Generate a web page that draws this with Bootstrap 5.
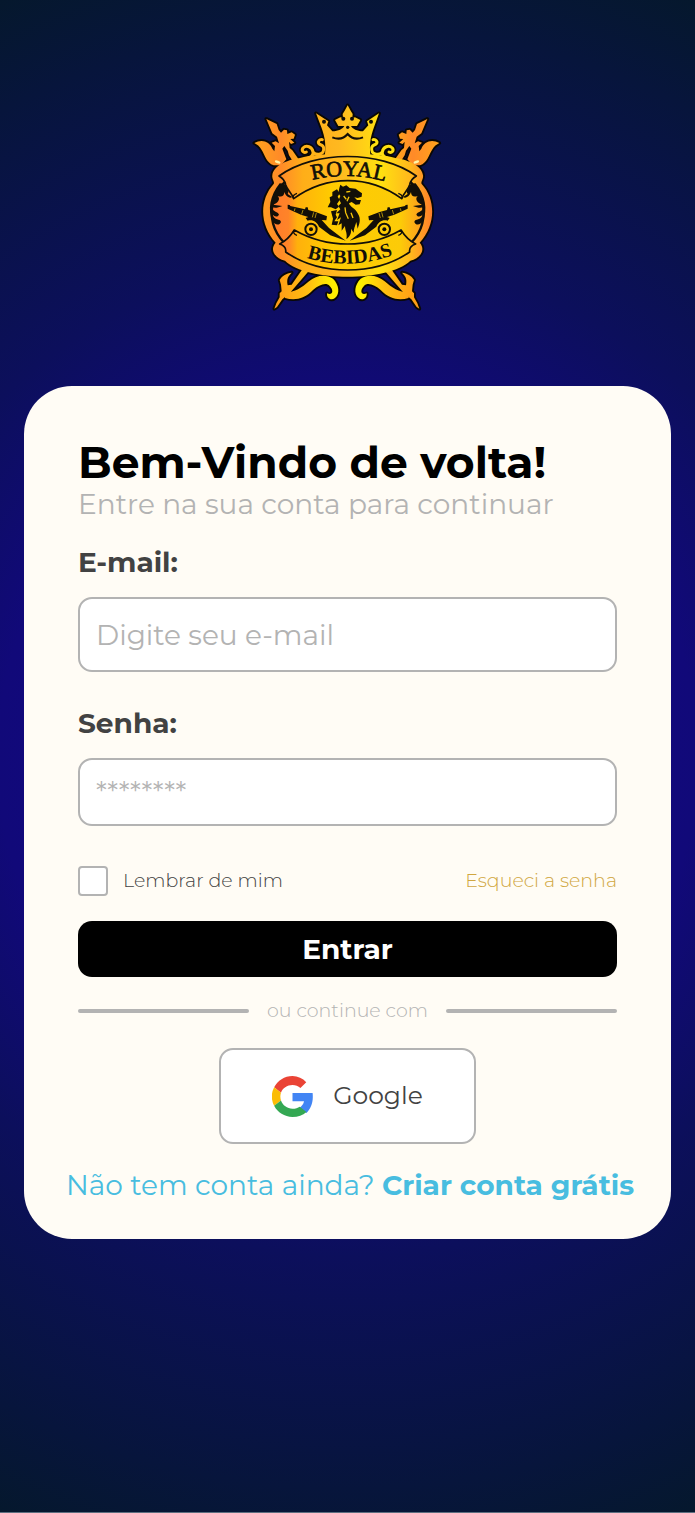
<!DOCTYPE html>
<html lang="pt-BR">
<head>
<meta charset="utf-8">
<meta name="viewport" content="width=device-width, initial-scale=1">
<title>Royal Bebidas - Entrar</title>
<link href="https://cdn.jsdelivr.net/npm/bootstrap@5.3.0/dist/css/bootstrap.min.css" rel="stylesheet">
<style>
  body {
    font-family: Montserrat, "Open Sans", sans-serif;
    font-size: 28px;
    line-height: 36px;
    color: #424242;
    background: #05182d radial-gradient(circle farthest-corner at 50% 50%, #14068c 0%, #110979 42%, #0c0f5c 60%, #07153c 88%, #05182d 100%);
    border-bottom: 1px solid #5d6f80;
  }
  .page-shell { padding: 96px 24px 0; }
  .brand-logo { height: 220px; }
  .login-card {
    margin-top: 70px;
    padding: 54px 54px 36px;
    border-radius: 48px;
    background: #fffcf5;
  }
  .login-title { font-size: 44px; line-height: 44px; font-weight: 700; color: #000; }
  .login-subtitle { line-height: 40px; margin-bottom: 20px; }
  .soft { color: #b3b3b3; }
  .field-label { font-weight: 700; margin-bottom: 17px; }
  .field-box {
    height: 75px;
    padding: 0 16px;
    border: 2px solid #b3b3b3;
    border-radius: 14px;
    font-size: 28px;
    background: #fff;
  }
  .field-box::placeholder { color: #b3b3b3; }
  .field-short { height: 68px; }
  .mb-field { margin-bottom: 33px; }
  .options-row { margin: 40px 0 25px; font-size: 19px; line-height: 30px; font-weight: 300; }
  .remember-box { width: 30px; height: 30px; border: 2px solid #b3b3b3; border-radius: 4px !important; }
  .remember { gap: 15px; }
  .forgot { color: #d0a640; }
  .btn-enter {
    height: 56px;
    padding: 0;
    border: 0;
    border-radius: 14px;
    background: #000;
    color: #fff;
    font-size: 28px;
    font-weight: 700;
  }
  .divider { gap: 18px; margin: 20px 0 23px; font-size: 19px; line-height: 28px; font-weight: 300; }
  .divider-line { height: 4px; border-radius: 2px; background: #b3b3b3; }
  .btn-google {
    width: 257px;
    height: 96px;
    gap: 20px;
    border: 2px solid #b3b3b3;
    border-radius: 14px;
    background: #fff;
    color: #424242;
    font-size: 25px;
  }
  .signup { margin: 23px -30px 0 -12px; color: #48bde0; }
  .signup a { color: inherit; font-weight: 700; }
</style>
</head>
<body class="min-vh-100">
<main class="page-shell">
  <header class="text-center">
    <svg class="brand-logo d-block mx-auto" viewBox="0 0 615 660" role="img" aria-label="Royal Bebidas">
      <defs>
        <linearGradient id="gold" gradientUnits="userSpaceOnUse" x1="30" y1="0" x2="585" y2="0">
          <stop offset="0" stop-color="#ffa31c"/><stop offset=".14" stop-color="#ff8a28"/><stop offset=".26" stop-color="#ffae18"/>
          <stop offset=".45" stop-color="#ffb820"/><stop offset=".68" stop-color="#ffe010"/><stop offset=".84" stop-color="#ffb81c"/><stop offset="1" stop-color="#ff6a30"/>
        </linearGradient>
        <linearGradient id="goldLow" gradientUnits="userSpaceOnUse" x1="80" y1="0" x2="535" y2="0">
          <stop offset="0" stop-color="#ff9618"/><stop offset=".25" stop-color="#ffc010"/><stop offset=".4" stop-color="#fff000"/>
          <stop offset=".6" stop-color="#ffe800"/><stop offset="1" stop-color="#ff9c18"/>
        </linearGradient>
        <linearGradient id="goldIn" gradientUnits="userSpaceOnUse" x1="80" y1="0" x2="535" y2="0">
          <stop offset="0" stop-color="#ff7a2c"/><stop offset=".11" stop-color="#ff8428"/><stop offset=".17" stop-color="#ffb00c"/>
          <stop offset=".4" stop-color="#ffcc00"/><stop offset=".85" stop-color="#fccb08"/><stop offset="1" stop-color="#ff9a20"/>
        </linearGradient>
        <g id="spear">
          <path d="M64 69L95 84L101 102L108 110L117 101L126 103L127 114L140 109L150 116L146 128L136 129L148 140L138 144L132 137L134 156L142 163L165 196L150 206L132 178L128 164L118 150L112 158L124 190L108 208L86 208C64 200 60 178 50 162C44 150 36 146 28 141C50 128 74 136 82 158L88 166L90 150L80 140L92 136L102 142L96 122L82 112Z"/>
        </g>
        <path id="scroll" d="M184 168C176 172 168 164 174 156C184 146 202 152 204 168C206 178 196 186 184 188M204 168C216 180 238 176 236 156C234 142 220 150 220 138C222 132 228 130 232 131" fill="none"/>
        <g id="saber">
          <path d="M172 520L192 524L134 592L112 610L96 633L88 638L94 622L104 604L104 592L110 586L108 566L104 552C112 538 124 532 140 530C130 540 124 548 128 568L140 566Z"/>
          <path d="M120 590C150 588 170 576 192 556C214 536 244 534 264 548C282 566 286 592 270 606C258 616 244 606 246 592C262 600 268 584 254 570C244 558 222 566 204 582C178 610 148 614 120 606Z"/>
        </g>
        <path id="crown" d="M236 200C246 152 240 124 229 94L213 52L250 76L246 88L262 106C280 106 294 98 298 90L280 90L270 72L286 64L294 66L293 54L299 44L308 28L317 44L323 54L322 66L330 64L346 72L336 90L318 90C322 98 336 106 354 106L370 88L366 76L402 52L387 94C376 124 370 152 380 200Z"/>
        <path id="shield" d="M82 238C84 212 122 192 165 186C220 168 396 168 451 186C494 192 532 212 534 238C536 250 526 256 530 264C574 312 572 388 524 440C544 462 524 488 496 494C430 558 186 558 120 494C92 488 72 462 92 440C44 388 42 312 86 264C90 256 80 250 82 238Z"/>
        <path id="royalArc" d="M190 255Q308 222 432 260"/>
        <path id="bebidasArc" d="M180 484Q308 526 450 475"/>
        <g id="cannon">
          <path d="M128 326L134 327L136 330L180 340L182 334L188 334L190 342L212 348L234 356L246 361L244 373L228 372L206 366L192 364L168 356L138 343L128 338Z"/>
          <path d="M182 366L198 360L228 370L252 396L302 434L256 418L222 392C216 378 204 370 188 374Z"/>
          <circle cx="198" cy="400" r="17" fill="none" stroke="#120f08" stroke-width="6"/>
          <circle cx="198" cy="400" r="6"/>
          <path d="M174 342L170 355M206 349L202 364M214 351L210 366M150 337L148 345" stroke="#f6c50a" stroke-width="2"/>
        </g>
        <path id="leaf" d="M104 262C132 262 134 286 128 294L142 303C132 310 120 296 118 288C118 302 108 304 98 300C108 310 98 322 84 326L112 330C98 336 90 336 80 334C86 350 98 346 102 356C96 366 86 360 82 354C88 376 106 366 108 378C102 392 88 384 82 376C68 340 74 300 104 262Z"/>
      </defs>
      <g fill="#0a0804" stroke="#0a0804" stroke-width="11" stroke-linejoin="round" stroke-linecap="round">
        <use href="#spear"/><use href="#spear" transform="translate(611 0) scale(-1 1)"/>
        <g stroke-width="19"><use href="#scroll"/><use href="#scroll" transform="translate(616 0) scale(-1 1)"/></g>
        <use href="#saber"/><use href="#saber" transform="translate(611 0) scale(-1 1)"/>
        <use href="#crown"/><use href="#shield"/>
      </g>
      <g fill="url(#gold)">
        <use href="#spear"/>
        <g transform="translate(611 0) scale(-1 1)"><use href="#spear"/></g>
        <use href="#crown"/>
      </g>
      <g stroke-width="9" stroke-linecap="round">
        <use href="#scroll" stroke="#ffb418"/>
        <use href="#scroll" stroke="#ffe010" transform="translate(616 0) scale(-1 1)"/>
      </g>
      <g fill="url(#goldLow)">
        <use href="#saber"/>
        <g transform="translate(611 0) scale(-1 1)"><use href="#saber"/></g>
      </g>
      <use href="#shield" fill="url(#gold)"/>
      <ellipse cx="308" cy="350" rx="228" ry="163" fill="url(#goldIn)" stroke="#120f08" stroke-width="7"/>
      <g fill="#120f08">
        <use href="#leaf"/><use href="#leaf" transform="translate(616 0) scale(-1 1)"/>
        <use href="#cannon"/><use href="#cannon" transform="translate(616 0) scale(-1 1)"/>
        <path d="M283 276L286 266L294 272L304 268L314 276L332 278L342 286L351 292L350 302L338 306L328 304L336 312L348 312L344 325L332 326L320 318L312 322C316 334 332 338 338 352C350 370 342 386 338 398L334 378C330 392 326 398 326 410L318 398C320 414 312 424 304 429C308 412 300 404 300 390L290 404L290 382L280 388L288 364L276 372L284 352L274 352L286 340L280 330L288 322L282 310L286 300L280 292Z"/>
        <path d="M276 280L284 292L278 302L284 312L276 324L282 332L272 340L258 334L248 334L256 318L254 304L262 300L262 288Z"/>
        <path d="M258 346L276 342L272 356L276 364L268 376L280 376L276 388L260 386L264 368Z"/>
        <path d="M304 288L316 286M296 300L304 310M312 302L306 316M300 334L302 350L310 368M318 350L324 366" fill="none" stroke="#f6c50a" stroke-width="4"/>
        <path d="M262 124C282 132 298 126 308 114C318 126 334 132 354 124" fill="none" stroke="#120f08" stroke-width="6"/>
        <circle cx="295" cy="68" r="6"/><circle cx="321" cy="68" r="6"/><circle cx="308" cy="94" r="5"/>
        <circle cx="237" cy="77" r="6"/><circle cx="378" cy="77" r="6"/>
      </g>
      <g fill="url(#gold)" stroke="#120f08" stroke-width="5" stroke-linejoin="round">
        <path d="M102 240C210 162 406 162 514 240C500 248 496 256 494 266C490 282 476 290 470 308C370 236 246 236 146 308C140 290 126 282 122 266C120 256 116 248 102 240Z"/>
        <path fill="url(#goldIn)" d="M104 444C120 436 138 418 148 402C246 458 370 458 468 402C478 418 496 436 512 444C500 448 492 456 494 468C390 540 226 540 122 468C124 456 116 448 104 444Z"/>
      </g>
      <g fill="none" stroke="#120f08" stroke-width="4">
        <path d="M148 402C142 408 148 416 156 418M468 402C474 408 468 416 460 418M146 308C140 300 150 294 156 292M470 308C476 300 466 294 460 292"/>
      </g>
      <g fill="#120f08" font-family="'Liberation Serif', serif">
        <text font-size="66" stroke="#120f08" stroke-width="2"><textPath href="#royalArc" startOffset="50%" text-anchor="middle">ROYAL</textPath></text>
        <text font-size="60" font-weight="700"><textPath href="#bebidasArc" startOffset="50%" text-anchor="middle">BEBIDAS</textPath></text>
      </g>
      <g fill="#fff6a8"><ellipse cx="98" cy="198" rx="9" ry="4" transform="rotate(20 98 198)"/><ellipse cx="514" cy="198" rx="9" ry="4" transform="rotate(-20 514 198)"/></g>
    </svg>
  </header>

  <section class="login-card">
    <h1 class="login-title mb-0">Bem-Vindo de volta!</h1>
    <p class="login-subtitle soft">Entre na sua conta para continuar</p>
    <form>
      <label class="field-label d-block" for="email">E-mail:</label>
      <input class="form-control field-box mb-field" type="email" id="email" placeholder="Digite seu e-mail">
      <label class="field-label d-block" for="senha">Senha:</label>
      <input class="form-control field-box field-short" type="password" id="senha" placeholder="********">
      <div class="options-row d-flex justify-content-between align-items-center">
        <div class="remember d-flex align-items-center">
          <input class="form-check-input remember-box m-0" type="checkbox" id="lembrar">
          <label for="lembrar">Lembrar de mim</label>
        </div>
        <a class="forgot text-decoration-none" href="#">Esqueci a senha</a>
      </div>
      <button class="btn btn-enter w-100 d-block" type="submit">Entrar</button>
      <div class="divider d-flex align-items-center">
        <span class="divider-line flex-fill"></span>
        <span class="soft">ou continue com</span>
        <span class="divider-line flex-fill"></span>
      </div>
      <button class="btn btn-google d-flex align-items-center justify-content-center mx-auto" type="button">
        <svg width="41" height="41" viewBox="3 3 42 42" aria-hidden="true">
          <path fill="#EA4335" d="M24 12.2c3.1 0 5.900 1.100 8.100 3.100l6-6C34.400 5.400 29.500 3 24 3 15.800 3 8.700 7.700 5.200 14.600l7 5.500C13.900 15.400 18.500 12.200 24 12.200z"/>
          <path fill="#4285F4" d="M44.600 20.500H24v8.400h11.800c-.5 2.700-2 5-4.400 6.500l6.900 5.400C42.300 37 44.800 31.300 44.800 24.500c0-1.400 0-2.700-.2-4z"/>
          <path fill="#FBBC05" d="M12.200 28.100a13 13 0 0 1 0-8l-7-5.500a21 21 0 0 0 0 19l7-5.500z"/>
          <path fill="#34A853" d="M24 45c5.700 0 10.500-1.900 14.300-5.200l-6.900-5.400C29.500 35.700 27 36.500 24 36.500c-5.500 0-10.100-3.600-11.800-8.400l-7 5.500C8.700 40.400 15.800 45 24 45z"/>
        </svg>
        Google
      </button>
    </form>
    <p class="signup mb-0 text-nowrap">Não tem conta ainda? <a class="text-decoration-none" href="#">Criar conta grátis</a></p>
  </section>
</main>
<script src="https://cdn.jsdelivr.net/npm/bootstrap@5.3.0/dist/js/bootstrap.bundle.min.js"></script>
</body>
</html>
